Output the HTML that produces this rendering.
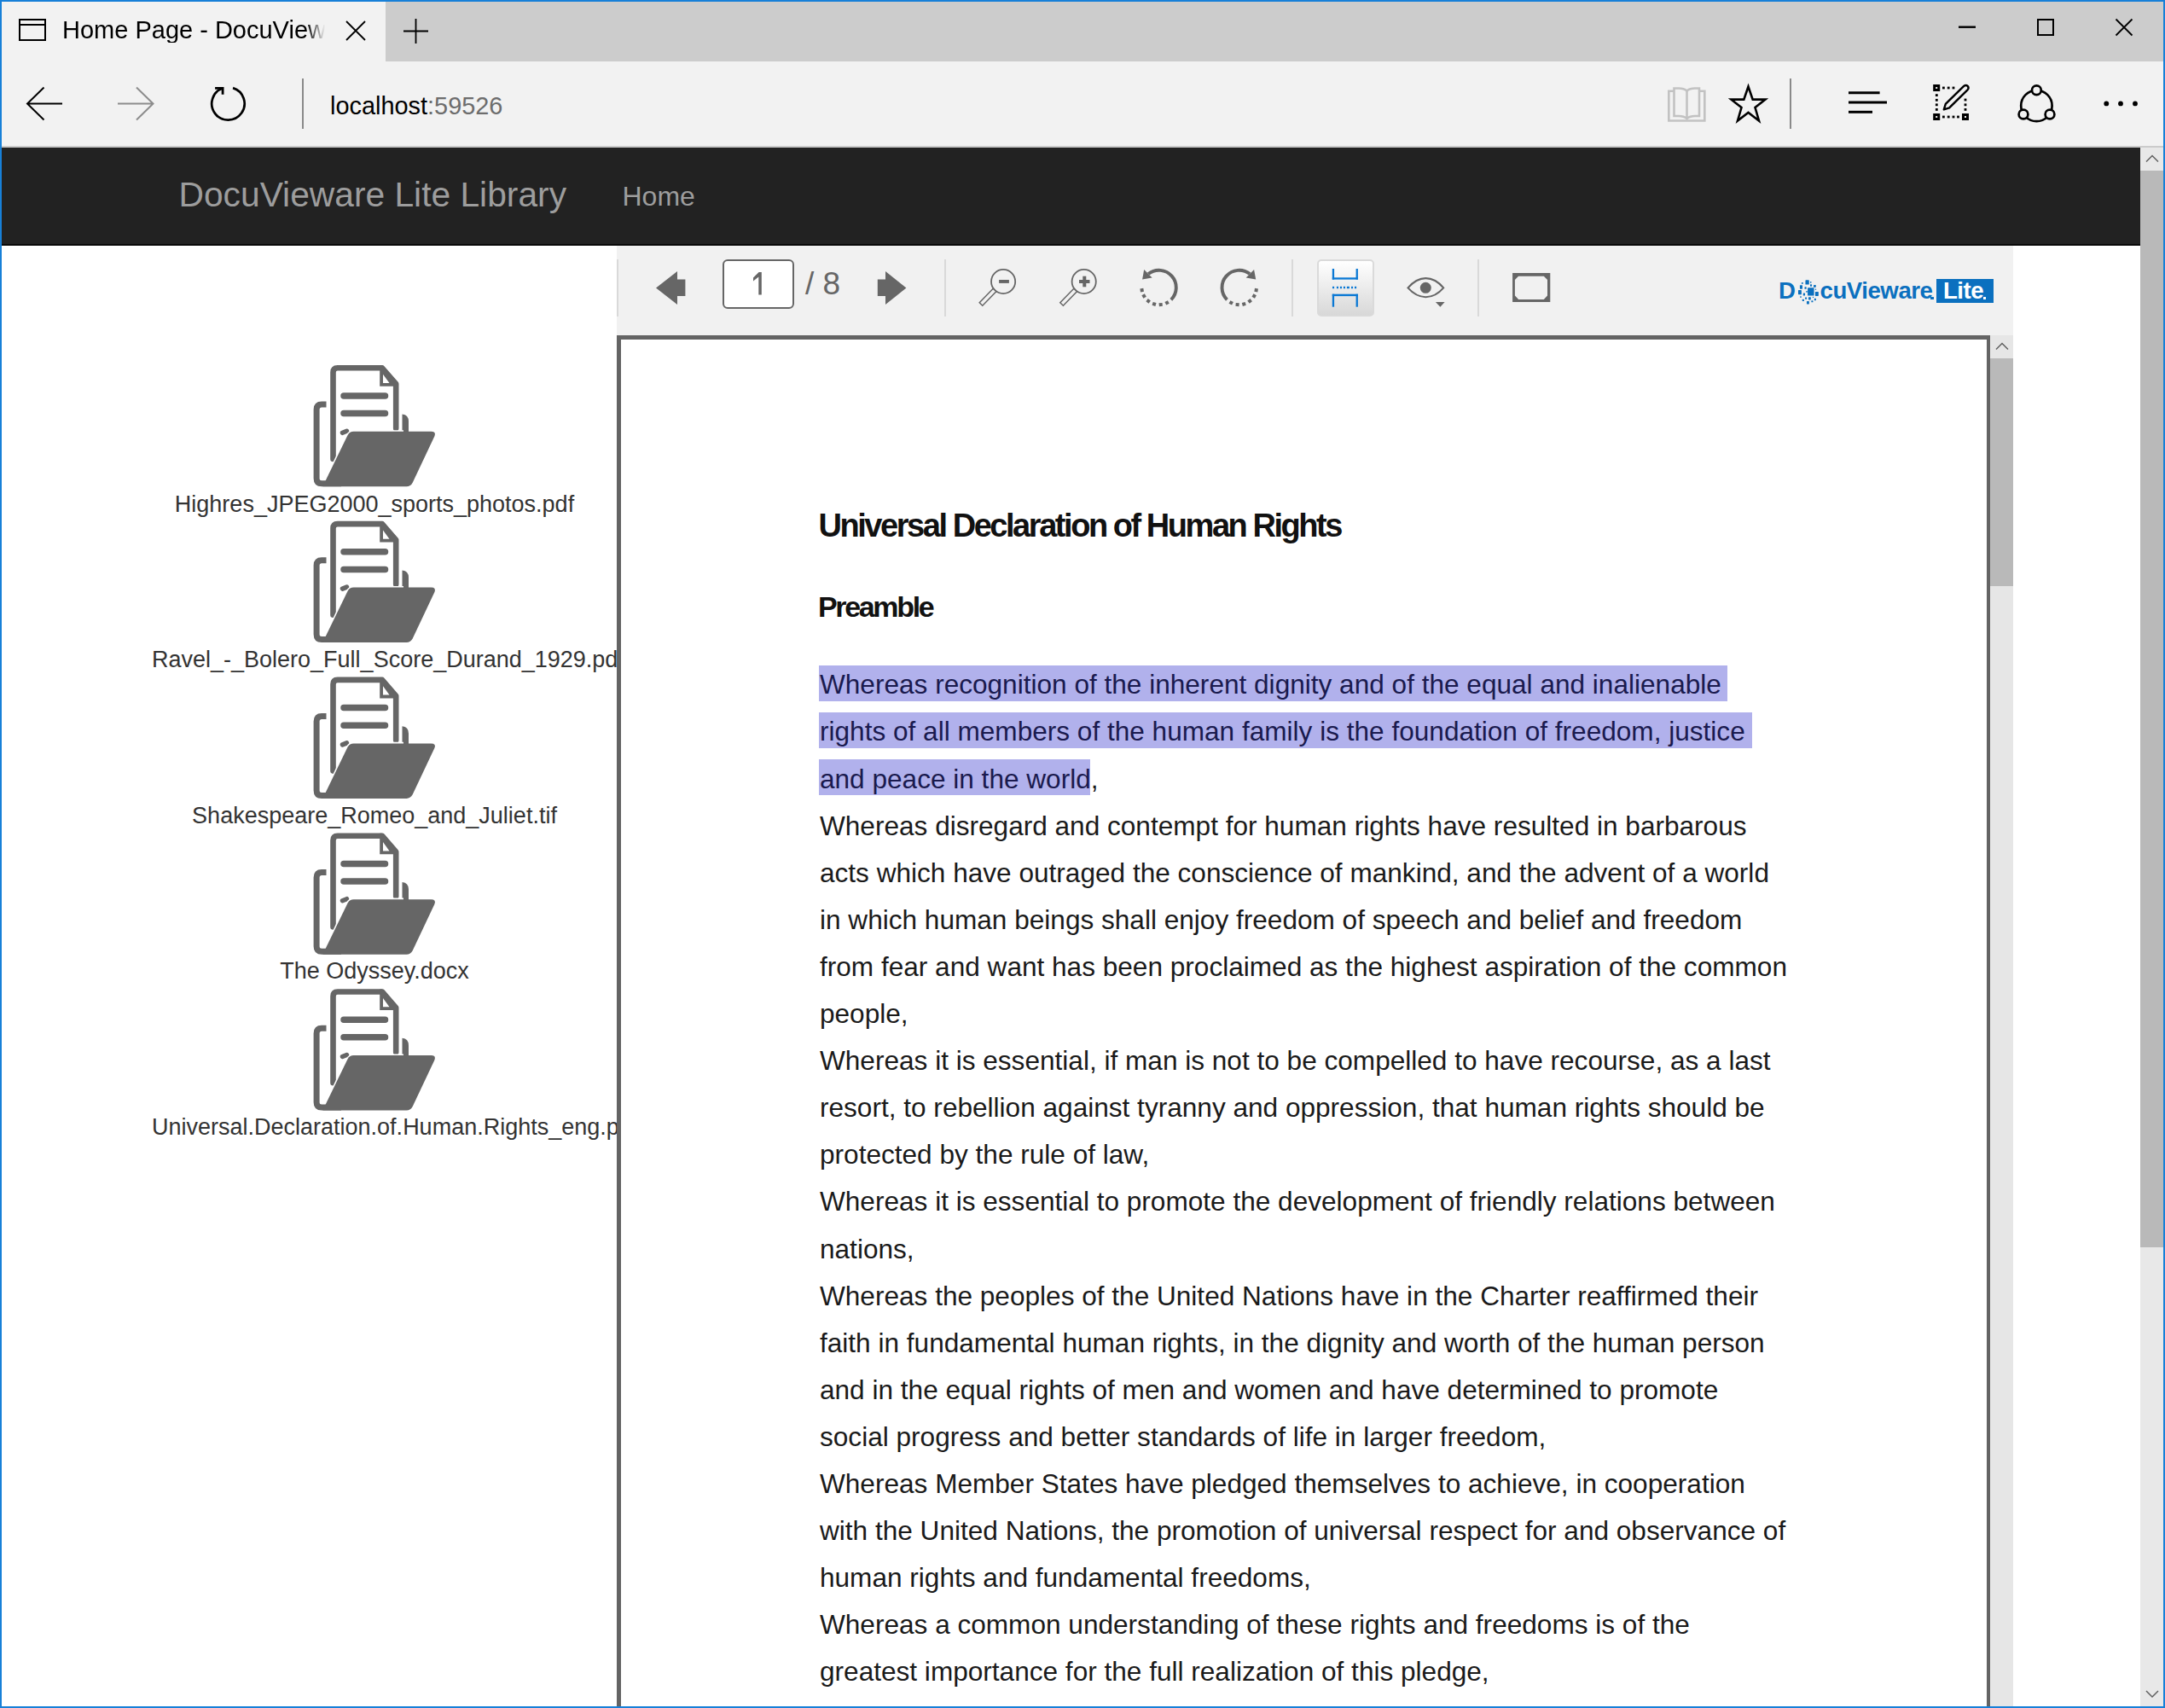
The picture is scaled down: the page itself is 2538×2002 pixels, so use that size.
<!DOCTYPE html>
<html><head><meta charset="utf-8"><title>Home Page - DocuVieware</title>
<style>
html,body{margin:0;padding:0;width:2538px;height:2002px;overflow:hidden;background:#fff}
body{position:relative;font-family:"Liberation Sans", sans-serif}
div{box-sizing:content-box}
</style></head><body>
<div style="position:absolute;left:0px;top:0px;width:2538px;height:2002px;background:#ffffff;"></div>
<div style="position:absolute;left:0px;top:0px;width:2538px;height:72px;background:#cccccc;"></div>
<div style="position:absolute;left:0px;top:0px;width:452px;height:72px;background:#f2f2f2;"></div>
<div style="position:absolute;left:0px;top:72px;width:2538px;height:99px;background:#f2f2f2;"></div>
<div style="position:absolute;left:0px;top:171px;width:2538px;height:2px;background:#cbcbcb;"></div>
<div style="position:absolute;left:0px;top:173px;width:2509px;height:113px;background:#222222;"></div>
<div style="position:absolute;left:0px;top:286px;width:2509px;height:2px;background:#080808;"></div>
<div style="position:absolute;left:2509px;top:173px;width:27px;height:1829px;background:#e8e8e8;"></div>
<div style="position:absolute;left:2509px;top:200px;width:27px;height:1262px;background:#b9b9b9;"></div>
<div style="position:absolute;left:73px;top:21.45px;width:308px;overflow:hidden;font-size:29px;line-height:29px;color:#000;white-space:pre;-webkit-mask-image:linear-gradient(to right,#000 93%,transparent 100%)">Home Page - DocuView</div>
<div style="position:absolute;left:387px;top:109.54px;font-size:28.9px;line-height:28.9px;color:#000;font-weight:normal;letter-spacing:0px;white-space:pre;">localhost<span style="color:#6d6d6d">:59526</span></div>
<div style="position:absolute;left:209.5px;top:208.11px;font-size:40.75px;line-height:40.75px;color:#9d9d9d;font-weight:normal;letter-spacing:0px;white-space:pre;">DocuVieware Lite Library</div>
<div style="position:absolute;left:729.5px;top:213.71px;font-size:32px;line-height:32px;color:#9d9d9d;font-weight:normal;letter-spacing:0px;white-space:pre;">Home</div>
<div style="position:absolute;left:178px;width:522px;top:577.94px;font-size:27px;line-height:27px;color:#333;text-align:center;white-space:nowrap;overflow:visible"><span style="display:inline-block;min-width:100%">Highres_JPEG2000_sports_photos.pdf</span></div>
<div style="position:absolute;left:178px;width:522px;top:760.44px;font-size:27px;line-height:27px;color:#333;text-align:center;white-space:nowrap;overflow:visible"><span style="display:inline-block;min-width:100%">Ravel_-_Bolero_Full_Score_Durand_1929.pdf</span></div>
<div style="position:absolute;left:178px;width:522px;top:942.94px;font-size:27px;line-height:27px;color:#333;text-align:center;white-space:nowrap;overflow:visible"><span style="display:inline-block;min-width:100%">Shakespeare_Romeo_and_Juliet.tif</span></div>
<div style="position:absolute;left:178px;width:522px;top:1125.44px;font-size:27px;line-height:27px;color:#333;text-align:center;white-space:nowrap;overflow:visible"><span style="display:inline-block;min-width:100%">The Odyssey.docx</span></div>
<div style="position:absolute;left:178px;width:522px;top:1307.94px;font-size:27px;line-height:27px;color:#333;text-align:center;white-space:nowrap;overflow:visible"><span style="display:inline-block;min-width:100%">Universal.Declaration.of.Human.Rights_eng.pdf</span></div>
<div style="position:absolute;left:723px;top:288px;width:1637px;height:105px;background:#f1f1f1;"></div>
<div style="position:absolute;left:723px;top:304px;width:2px;height:67px;background:#d9d9d9;"></div>
<div style="position:absolute;left:1107px;top:304px;width:2px;height:67px;background:#d9d9d9;"></div>
<div style="position:absolute;left:1514px;top:304px;width:2px;height:67px;background:#d9d9d9;"></div>
<div style="position:absolute;left:1732px;top:304px;width:2px;height:67px;background:#d9d9d9;"></div>
<div style="position:absolute;left:846.8px;top:304px;width:80.7px;height:53.5px;border:2px solid #666;border-radius:6px;background:#fff"></div>
<div style="position:absolute;left:944px;top:314.28px;font-size:37px;line-height:37px;color:#666;font-weight:normal;letter-spacing:0px;white-space:pre;">/ 8</div>
<div style="position:absolute;left:1543.5px;top:304px;width:63px;height:62.5px;border:2px solid #dadada;border-radius:5px;background:linear-gradient(#ffffff,#d8d8d8)"></div>
<div style="position:absolute;left:2084.9px;top:327.44px;font-size:27.6px;line-height:27.6px;color:#0b70bf;font-weight:bold;letter-spacing:0px;white-space:pre;">D</div>
<div style="position:absolute;left:2133.5px;top:327.44px;font-size:27.6px;line-height:27.6px;color:#0b70bf;font-weight:bold;letter-spacing:-0.45px;white-space:pre;">cuVieware</div>
<div style="position:absolute;left:2263px;top:347.5px;width:3.5px;height:3.3000000000000114px;background:#0b70bf;"></div>
<div style="position:absolute;left:2270px;top:326.8px;width:67px;height:28.0px;background:#0b70bf;"></div>
<div style="position:absolute;left:2278px;top:327.44px;font-size:27.6px;line-height:27.6px;color:#fff;font-weight:bold;letter-spacing:-0.5px;white-space:pre;">Lite</div>
<div style="position:absolute;left:2324.5px;top:347.5px;width:3.5px;height:3.3000000000000114px;background:#fff;"></div>
<div style="position:absolute;left:723px;top:393px;width:1601px;height:1700px;border:5px solid #646464;border-right-width:4px;background:#fff"></div>
<div style="position:absolute;left:2333px;top:393px;width:27px;height:1609px;background:#e6e6e6;"></div>
<div style="position:absolute;left:2333px;top:420px;width:27px;height:266.5px;background:#b9b9b9;"></div>
<div style="position:absolute;left:960px;top:780.3px;width:1065.4px;height:41.5px;background:#b1b1ec;"></div>
<div style="position:absolute;left:960px;top:835.1px;width:1093.5px;height:41.60000000000002px;background:#b1b1ec;"></div>
<div style="position:absolute;left:960px;top:890px;width:318px;height:41.799999999999955px;background:#b1b1ec;"></div>
<div style="position:absolute;left:959.5px;top:597.23px;font-size:38px;line-height:38px;color:#111;font-weight:bold;letter-spacing:-2.45px;white-space:pre;">Universal Declaration of Human Rights</div>
<div style="position:absolute;left:959px;top:693.72px;font-size:34px;line-height:34px;color:#111;font-weight:bold;letter-spacing:-2.35px;white-space:pre;">Preamble</div>
<div style="position:absolute;left:961px;top:787.37px;font-size:31.58px;line-height:31.58px;color:#1a1a4e;font-weight:normal;letter-spacing:0px;white-space:pre;">Whereas recognition of the inherent dignity and of the equal and inalienable</div>
<div style="position:absolute;left:961px;top:842.47px;font-size:31.58px;line-height:31.58px;color:#1a1a4e;font-weight:normal;letter-spacing:0px;white-space:pre;">rights of all members of the human family is the foundation of freedom, justice</div>
<div style="position:absolute;left:961px;top:897.57px;font-size:31.58px;line-height:31.58px;color:#1a1a4e;font-weight:normal;letter-spacing:0px;white-space:pre;">and peace in the world<span style="color:#1a1a1a">,</span></div>
<div style="position:absolute;left:961px;top:952.67px;font-size:31.58px;line-height:31.58px;color:#1a1a1a;font-weight:normal;letter-spacing:0px;white-space:pre;">Whereas disregard and contempt for human rights have resulted in barbarous</div>
<div style="position:absolute;left:961px;top:1007.77px;font-size:31.58px;line-height:31.58px;color:#1a1a1a;font-weight:normal;letter-spacing:0px;white-space:pre;">acts which have outraged the conscience of mankind, and the advent of a world</div>
<div style="position:absolute;left:961px;top:1062.87px;font-size:31.58px;line-height:31.58px;color:#1a1a1a;font-weight:normal;letter-spacing:0px;white-space:pre;">in which human beings shall enjoy freedom of speech and belief and freedom</div>
<div style="position:absolute;left:961px;top:1117.97px;font-size:31.58px;line-height:31.58px;color:#1a1a1a;font-weight:normal;letter-spacing:0px;white-space:pre;">from fear and want has been proclaimed as the highest aspiration of the common</div>
<div style="position:absolute;left:961px;top:1173.07px;font-size:31.58px;line-height:31.58px;color:#1a1a1a;font-weight:normal;letter-spacing:0px;white-space:pre;">people,</div>
<div style="position:absolute;left:961px;top:1228.17px;font-size:31.58px;line-height:31.58px;color:#1a1a1a;font-weight:normal;letter-spacing:0px;white-space:pre;">Whereas it is essential, if man is not to be compelled to have recourse, as a last</div>
<div style="position:absolute;left:961px;top:1283.27px;font-size:31.58px;line-height:31.58px;color:#1a1a1a;font-weight:normal;letter-spacing:0px;white-space:pre;">resort, to rebellion against tyranny and oppression, that human rights should be</div>
<div style="position:absolute;left:961px;top:1338.37px;font-size:31.58px;line-height:31.58px;color:#1a1a1a;font-weight:normal;letter-spacing:0px;white-space:pre;">protected by the rule of law,</div>
<div style="position:absolute;left:961px;top:1393.47px;font-size:31.58px;line-height:31.58px;color:#1a1a1a;font-weight:normal;letter-spacing:0px;white-space:pre;">Whereas it is essential to promote the development of friendly relations between</div>
<div style="position:absolute;left:961px;top:1448.57px;font-size:31.58px;line-height:31.58px;color:#1a1a1a;font-weight:normal;letter-spacing:0px;white-space:pre;">nations,</div>
<div style="position:absolute;left:961px;top:1503.67px;font-size:31.58px;line-height:31.58px;color:#1a1a1a;font-weight:normal;letter-spacing:0px;white-space:pre;">Whereas the peoples of the United Nations have in the Charter reaffirmed their</div>
<div style="position:absolute;left:961px;top:1558.77px;font-size:31.58px;line-height:31.58px;color:#1a1a1a;font-weight:normal;letter-spacing:0px;white-space:pre;">faith in fundamental human rights, in the dignity and worth of the human person</div>
<div style="position:absolute;left:961px;top:1613.87px;font-size:31.58px;line-height:31.58px;color:#1a1a1a;font-weight:normal;letter-spacing:0px;white-space:pre;">and in the equal rights of men and women and have determined to promote</div>
<div style="position:absolute;left:961px;top:1668.97px;font-size:31.58px;line-height:31.58px;color:#1a1a1a;font-weight:normal;letter-spacing:0px;white-space:pre;">social progress and better standards of life in larger freedom,</div>
<div style="position:absolute;left:961px;top:1724.07px;font-size:31.58px;line-height:31.58px;color:#1a1a1a;font-weight:normal;letter-spacing:0px;white-space:pre;">Whereas Member States have pledged themselves to achieve, in cooperation</div>
<div style="position:absolute;left:961px;top:1779.17px;font-size:31.58px;line-height:31.58px;color:#1a1a1a;font-weight:normal;letter-spacing:0px;white-space:pre;">with the United Nations, the promotion of universal respect for and observance of</div>
<div style="position:absolute;left:961px;top:1834.27px;font-size:31.58px;line-height:31.58px;color:#1a1a1a;font-weight:normal;letter-spacing:0px;white-space:pre;">human rights and fundamental freedoms,</div>
<div style="position:absolute;left:961px;top:1889.37px;font-size:31.58px;line-height:31.58px;color:#1a1a1a;font-weight:normal;letter-spacing:0px;white-space:pre;">Whereas a common understanding of these rights and freedoms is of the</div>
<div style="position:absolute;left:961px;top:1944.47px;font-size:31.58px;line-height:31.58px;color:#1a1a1a;font-weight:normal;letter-spacing:0px;white-space:pre;">greatest importance for the full realization of this pledge,</div>
<div style="position:absolute;left:0px;top:0px;width:2538px;height:2px;background:#1780d8;"></div>
<div style="position:absolute;left:0px;top:0px;width:2px;height:2002px;background:#1780d8;"></div>
<div style="position:absolute;left:2536px;top:0px;width:2px;height:2002px;background:#1780d8;"></div>
<div style="position:absolute;left:0px;top:2000px;width:2538px;height:2px;background:#1780d8;"></div>
<svg width="2538" height="2002" style="position:absolute;left:0;top:0">
<defs><filter id="soft" x="-5%" y="-5%" width="110%" height="110%"><feGaussianBlur stdDeviation="0.6"/></filter></defs>
<rect x="23" y="23" width="30" height="24" fill="none" stroke="#000" stroke-width="2"/><line x1="22" y1="29" x2="54" y2="29" stroke="#000" stroke-width="2"/>
<path d="M406 25 L428 47 M428 25 L406 47" stroke="#000" stroke-width="1.8" fill="none"/>
<path d="M487.5 22 V51 M473 36.5 H502" stroke="#000" stroke-width="1.8" fill="none"/>
<path d="M51.5 102.5 L32 121.5 L51.5 140.5 M32 121.5 H73" stroke="#000" stroke-width="2" fill="none"/>
<path d="M160 102.5 L179.5 121.5 L160 140.5 M179.5 121.5 H138" stroke="#8c8c8c" stroke-width="2" fill="none"/>
<path d="M273.06 103.09 A19.2 19.2 0 1 1 261.52 103.19" stroke="#000" stroke-width="2.7" fill="none"/><path d="M252.1 103.3 H261.1 V110.8" stroke="#000" stroke-width="2.8" fill="none"/>
<line x1="355" y1="92" x2="355" y2="151" stroke="#8a8a8a" stroke-width="2"/>
<rect x="2296" y="30.5" width="20" height="2.4" fill="#000"/>
<rect x="2389" y="23" width="18" height="18" fill="none" stroke="#000" stroke-width="2"/>
<path d="M2480.5 22.5 L2499.5 41.5 M2499.5 22.5 L2480.5 41.5" stroke="#000" stroke-width="1.8" fill="none"/>
<g stroke="#c2c2c2" stroke-width="2.6" fill="none"><path d="M1962 106.8 H1956.3 V141.5 H1998.3 V106.8 H1992.5"/><path d="M1962.5 103.5 V136 H1968 Q1974 136 1977.5 139 Q1981 136 1987 136 H1992 V103.5 H1987 Q1981 103.5 1977.5 106.5 Q1974 103.5 1968 103.5 Z"/><line x1="1977.5" y1="106.5" x2="1977.5" y2="138"/></g>
<path d="M2049.5 101.5 L2054.7 116.6 L2069.5 116.6 L2057.5 126 L2062 141.5 L2049.5 132 L2037 141.5 L2041.5 126 L2029.5 116.6 L2044.3 116.6 Z" fill="none" stroke="#000" stroke-width="2.6" stroke-linejoin="miter"/>
<line x1="2099" y1="92" x2="2099" y2="151" stroke="#8a8a8a" stroke-width="2"/>
<g stroke="#000" stroke-width="3"><line x1="2167" y1="108.7" x2="2203.6" y2="108.7"/><line x1="2167" y1="120" x2="2212" y2="120"/><line x1="2167" y1="131.3" x2="2195" y2="131.3"/></g>
<g fill="#000"><path d="M2266.2 99.1 h8 v8 h-8 Z M2269.2 102.1 v2 h2 v-2 Z" fill-rule="evenodd"/><path d="M2266.2 133 h8 v8 h-8 Z M2269.2 136 v2 h2 v-2 Z" fill-rule="evenodd"/><path d="M2300 133 h8 v8 h-8 Z M2303 136 v2 h2 v-2 Z" fill-rule="evenodd"/><rect x="2277.0" y="101.6" width="2.8" height="2.8"/><rect x="2282.7999999999997" y="101.6" width="2.8" height="2.8"/><rect x="2288.6" y="101.6" width="2.8" height="2.8"/><rect x="2268.9" y="110.19999999999999" width="2.8" height="2.8"/><rect x="2268.9" y="115.89999999999999" width="2.8" height="2.8"/><rect x="2268.9" y="121.39999999999999" width="2.8" height="2.8"/><rect x="2268.9" y="127.0" width="2.8" height="2.8"/><rect x="2277.0" y="135.6" width="2.8" height="2.8"/><rect x="2282.7999999999997" y="135.6" width="2.8" height="2.8"/><rect x="2288.6" y="135.6" width="2.8" height="2.8"/><rect x="2294.1" y="135.6" width="2.8" height="2.8"/><rect x="2302.6" y="115.6" width="2.8" height="2.8"/><rect x="2302.6" y="121.39999999999999" width="2.8" height="2.8"/><rect x="2302.6" y="127.0" width="2.8" height="2.8"/></g><path d="M2278.8 128.3 L2280.8 121.8 L2302.2 100.9 Q2304.6 98.9 2306.7 100.9 Q2308.6 103.1 2306.5 105.3 L2285.2 126.3 Z" fill="none" stroke="#000" stroke-width="2.4" stroke-linejoin="round"/>
<g stroke="#000" stroke-width="2.7" fill="#f2f2f2"><circle cx="2387.4" cy="124" r="18.2" fill="none"/><circle cx="2387.4" cy="105.8" r="5.4"/><circle cx="2372" cy="134" r="5.4"/><circle cx="2403" cy="134" r="5.4"/></g>
<g fill="#000"><circle cx="2469.3" cy="121.4" r="2.9"/><circle cx="2486" cy="121.4" r="2.9"/><circle cx="2503" cy="121.4" r="2.9"/></g>
<path d="M2516 189.5 L2523 182.5 L2530 189.5" stroke="#606060" stroke-width="1.5" fill="none"/>
<path d="M2516 1982 L2523 1989 L2530 1982" stroke="#606060" stroke-width="1.5" fill="none"/>
<g transform="translate(360,420.00)" filter="url(#soft)"><path d="M30.5 118 V16.5 Q30.5 11.3 35.7 11.3 H88 L104.2 30 V82" fill="none" stroke="#666" stroke-width="6.6" stroke-linejoin="round" stroke-linecap="round"/><path d="M85.2 8.3 H88 L106.8 30 V32.8 H85.2 Z M89 18.7 V29 H96.5 Z" fill="#666" fill-rule="evenodd"/><path d="M43 44 H91.5 M43 64.6 H91.5" stroke="#666" stroke-width="7.5" stroke-linecap="round"/><path d="M41.5 87.3 L46.5 85.3" stroke="#666" stroke-width="5.5" stroke-linecap="round"/><path d="M22.5 54 H17.1 Q11.1 54 11.1 60 V140.8 Q11.1 146.8 17.1 146.8 H40" fill="none" stroke="#666" stroke-width="7"/><path d="M111.5 88 V65.6 Q119 66.5 119 74 V88 Z" fill="#666"/><path d="M22.9 141 L47.6 90 Q50 85.8 54.5 85.8 H113" fill="none" stroke="#fff" stroke-width="3.2"/><path d="M54.5 85.8 H145.5 Q151.5 85.8 149.3 91.5 L123.8 145.5 Q121.5 150.3 116.5 150.3 H18.3 L47.6 90 Q50 85.8 54.5 85.8 Z" fill="#666"/></g>
<g transform="translate(360,602.80)" filter="url(#soft)"><path d="M30.5 118 V16.5 Q30.5 11.3 35.7 11.3 H88 L104.2 30 V82" fill="none" stroke="#666" stroke-width="6.6" stroke-linejoin="round" stroke-linecap="round"/><path d="M85.2 8.3 H88 L106.8 30 V32.8 H85.2 Z M89 18.7 V29 H96.5 Z" fill="#666" fill-rule="evenodd"/><path d="M43 44 H91.5 M43 64.6 H91.5" stroke="#666" stroke-width="7.5" stroke-linecap="round"/><path d="M41.5 87.3 L46.5 85.3" stroke="#666" stroke-width="5.5" stroke-linecap="round"/><path d="M22.5 54 H17.1 Q11.1 54 11.1 60 V140.8 Q11.1 146.8 17.1 146.8 H40" fill="none" stroke="#666" stroke-width="7"/><path d="M111.5 88 V65.6 Q119 66.5 119 74 V88 Z" fill="#666"/><path d="M22.9 141 L47.6 90 Q50 85.8 54.5 85.8 H113" fill="none" stroke="#fff" stroke-width="3.2"/><path d="M54.5 85.8 H145.5 Q151.5 85.8 149.3 91.5 L123.8 145.5 Q121.5 150.3 116.5 150.3 H18.3 L47.6 90 Q50 85.8 54.5 85.8 Z" fill="#666"/></g>
<g transform="translate(360,785.60)" filter="url(#soft)"><path d="M30.5 118 V16.5 Q30.5 11.3 35.7 11.3 H88 L104.2 30 V82" fill="none" stroke="#666" stroke-width="6.6" stroke-linejoin="round" stroke-linecap="round"/><path d="M85.2 8.3 H88 L106.8 30 V32.8 H85.2 Z M89 18.7 V29 H96.5 Z" fill="#666" fill-rule="evenodd"/><path d="M43 44 H91.5 M43 64.6 H91.5" stroke="#666" stroke-width="7.5" stroke-linecap="round"/><path d="M41.5 87.3 L46.5 85.3" stroke="#666" stroke-width="5.5" stroke-linecap="round"/><path d="M22.5 54 H17.1 Q11.1 54 11.1 60 V140.8 Q11.1 146.8 17.1 146.8 H40" fill="none" stroke="#666" stroke-width="7"/><path d="M111.5 88 V65.6 Q119 66.5 119 74 V88 Z" fill="#666"/><path d="M22.9 141 L47.6 90 Q50 85.8 54.5 85.8 H113" fill="none" stroke="#fff" stroke-width="3.2"/><path d="M54.5 85.8 H145.5 Q151.5 85.8 149.3 91.5 L123.8 145.5 Q121.5 150.3 116.5 150.3 H18.3 L47.6 90 Q50 85.8 54.5 85.8 Z" fill="#666"/></g>
<g transform="translate(360,968.40)" filter="url(#soft)"><path d="M30.5 118 V16.5 Q30.5 11.3 35.7 11.3 H88 L104.2 30 V82" fill="none" stroke="#666" stroke-width="6.6" stroke-linejoin="round" stroke-linecap="round"/><path d="M85.2 8.3 H88 L106.8 30 V32.8 H85.2 Z M89 18.7 V29 H96.5 Z" fill="#666" fill-rule="evenodd"/><path d="M43 44 H91.5 M43 64.6 H91.5" stroke="#666" stroke-width="7.5" stroke-linecap="round"/><path d="M41.5 87.3 L46.5 85.3" stroke="#666" stroke-width="5.5" stroke-linecap="round"/><path d="M22.5 54 H17.1 Q11.1 54 11.1 60 V140.8 Q11.1 146.8 17.1 146.8 H40" fill="none" stroke="#666" stroke-width="7"/><path d="M111.5 88 V65.6 Q119 66.5 119 74 V88 Z" fill="#666"/><path d="M22.9 141 L47.6 90 Q50 85.8 54.5 85.8 H113" fill="none" stroke="#fff" stroke-width="3.2"/><path d="M54.5 85.8 H145.5 Q151.5 85.8 149.3 91.5 L123.8 145.5 Q121.5 150.3 116.5 150.3 H18.3 L47.6 90 Q50 85.8 54.5 85.8 Z" fill="#666"/></g>
<g transform="translate(360,1151.20)" filter="url(#soft)"><path d="M30.5 118 V16.5 Q30.5 11.3 35.7 11.3 H88 L104.2 30 V82" fill="none" stroke="#666" stroke-width="6.6" stroke-linejoin="round" stroke-linecap="round"/><path d="M85.2 8.3 H88 L106.8 30 V32.8 H85.2 Z M89 18.7 V29 H96.5 Z" fill="#666" fill-rule="evenodd"/><path d="M43 44 H91.5 M43 64.6 H91.5" stroke="#666" stroke-width="7.5" stroke-linecap="round"/><path d="M41.5 87.3 L46.5 85.3" stroke="#666" stroke-width="5.5" stroke-linecap="round"/><path d="M22.5 54 H17.1 Q11.1 54 11.1 60 V140.8 Q11.1 146.8 17.1 146.8 H40" fill="none" stroke="#666" stroke-width="7"/><path d="M111.5 88 V65.6 Q119 66.5 119 74 V88 Z" fill="#666"/><path d="M22.9 141 L47.6 90 Q50 85.8 54.5 85.8 H113" fill="none" stroke="#fff" stroke-width="3.2"/><path d="M54.5 85.8 H145.5 Q151.5 85.8 149.3 91.5 L123.8 145.5 Q121.5 150.3 116.5 150.3 H18.3 L47.6 90 Q50 85.8 54.5 85.8 Z" fill="#666"/></g>
<polygon points="769,337.5 794,318 794,327.5 803.4,327.5 803.4,347 794,347 794,357" fill="#666"/>
<polygon points="1062.4,337.5 1038,318 1038,327.5 1028.8,327.5 1028.8,347 1038,347 1038,357" fill="#666"/>
<path d="M892.8 345.6 V319 H889.6 L883 325.6 V329.6 L889.3 324.4 V345.6 Z" fill="#666"/>
<circle cx="1176.1" cy="330" r="14.1" fill="none" stroke="#666" stroke-width="1.8"/><polygon points="1164.1999999999998,338.2 1167.8,341.8 1151.8,358.3 1148.1999999999998,354.7" fill="#f1f1f1" stroke="#666" stroke-width="1.5"/><rect x="1171.1" y="328" width="11.8" height="3.9" fill="#666"/>
<circle cx="1270.7" cy="330" r="14.1" fill="none" stroke="#666" stroke-width="1.8"/><polygon points="1258.8,338.2 1262.4,341.8 1246.4,358.3 1242.8,354.7" fill="#f1f1f1" stroke="#666" stroke-width="1.5"/><rect x="1265.0" y="328" width="12.5" height="4" fill="#666"/><rect x="1269.3" y="323.7" width="4" height="12.6" fill="#666"/>
<g transform="translate(1358.6,0) scale(1,1) translate(-1358.6,0)"><path d="M1346.16 321.08 A20.2 20.2 0 0 1 1372.88 351.28" fill="none" stroke="#666" stroke-width="3.9"/><polygon points="1341.1999999999998,315.9 1339.1,327.5 1350.6,325.5" fill="#666"/><rect x="1366.08" y="352.84" width="4" height="4" fill="#666" transform="rotate(62 1368.08 354.84)"/><rect x="1358.71" y="355.09" width="4" height="4" fill="#666" transform="rotate(84 1360.71 357.09)"/><rect x="1351.03" y="354.42" width="4" height="4" fill="#666" transform="rotate(106 1353.03 356.42)"/><rect x="1344.16" y="350.92" width="4" height="4" fill="#666" transform="rotate(128 1346.16 352.92)"/><rect x="1339.11" y="345.10" width="4" height="4" fill="#666" transform="rotate(150 1341.11 347.10)"/><rect x="1336.65" y="338.16" width="4" height="4" fill="#666" transform="rotate(171 1338.65 340.16)"/></g>
<g transform="translate(1452.7,0) scale(-1,1) translate(-1452.7,0)"><path d="M1440.26 321.08 A20.2 20.2 0 0 1 1466.98 351.28" fill="none" stroke="#666" stroke-width="3.9"/><polygon points="1435.3,315.9 1433.2,327.5 1444.7,325.5" fill="#666"/><rect x="1460.18" y="352.84" width="4" height="4" fill="#666" transform="rotate(62 1462.18 354.84)"/><rect x="1452.81" y="355.09" width="4" height="4" fill="#666" transform="rotate(84 1454.81 357.09)"/><rect x="1445.13" y="354.42" width="4" height="4" fill="#666" transform="rotate(106 1447.13 356.42)"/><rect x="1438.26" y="350.92" width="4" height="4" fill="#666" transform="rotate(128 1440.26 352.92)"/><rect x="1433.21" y="345.10" width="4" height="4" fill="#666" transform="rotate(150 1435.21 347.10)"/><rect x="1430.75" y="338.16" width="4" height="4" fill="#666" transform="rotate(171 1432.75 340.16)"/></g>
<g fill="#0a78d4"><rect x="1561.8" y="315" width="2.3" height="12.6"/><rect x="1589.6" y="315" width="2.3" height="12.6"/><rect x="1561.8" y="325.3" width="30.1" height="2.3"/><rect x="1561.8" y="344.7" width="30.1" height="2.4"/><rect x="1561.8" y="344.7" width="2.3" height="15"/><rect x="1589.6" y="344.7" width="2.3" height="15"/><rect x="1562" y="335.8" width="2.1" height="2.4"/><rect x="1566.9" y="335.8" width="2.1" height="2.4"/><rect x="1570.9" y="335.8" width="2.1" height="2.4"/><rect x="1574.9" y="335.8" width="2.1" height="2.4"/><rect x="1578.9" y="335.8" width="3.0" height="2.4"/><rect x="1584" y="335.8" width="2.1" height="2.4"/><rect x="1588" y="335.8" width="2.1" height="2.4"/></g>
<path d="M1650.5 337.4 C1657 330 1664 326.1 1671.3 326.1 C1679 326.1 1686 330 1692.2 337.4 C1686 344.6 1679 348.2 1671.3 348.2 C1664 348.2 1657 344.6 1650.5 337.4 Z" fill="none" stroke="#666" stroke-width="2.1"/><circle cx="1671.3" cy="337.3" r="6.5" fill="#666"/><polygon points="1682.9,354.1 1693.6,354.1 1688.4,359.7" fill="#666"/>
<path d="M1773.1 320 H1817.3 V354.1 H1773.1 Z M1780.1 323.7 L1775.9 328 V346.6 L1780.1 350.9 H1809.8 L1814 346.6 V328 L1809.8 323.7 Z" fill="#666" fill-rule="evenodd"/>
<g fill="#0b70bf"><rect x="2111.87" y="330.95" width="1.94" height="1.80" rx="0.6"/><rect x="2116.45" y="328.31" width="4.30" height="5.27" rx="0.6"/><rect x="2121.99" y="330.12" width="1.52" height="1.52" rx="0.6"/><rect x="2109.93" y="334.27" width="3.05" height="4.43" rx="0.6"/><rect x="2115.48" y="336.35" width="2.22" height="2.49" rx="0.6"/><rect x="2121.99" y="333.17" width="2.08" height="2.49" rx="0.6"/><rect x="2126.01" y="334.00" width="2.77" height="2.77" rx="0.6"/><rect x="2119.08" y="337.18" width="7.48" height="9.42" rx="0.6"/><rect x="2127.81" y="338.43" width="1.39" height="1.39" rx="0.6"/><rect x="2107.99" y="340.09" width="3.88" height="5.13" rx="0.6"/><rect x="2117.14" y="341.06" width="1.66" height="1.66" rx="0.6"/><rect x="2113.81" y="343.42" width="2.22" height="3.19" rx="0.6"/><rect x="2127.95" y="341.90" width="3.88" height="4.99" rx="0.6"/><rect x="2110.07" y="347.30" width="1.80" height="1.52" rx="0.6"/><rect x="2116.03" y="348.41" width="2.08" height="2.22" rx="0.6"/><rect x="2120.05" y="348.13" width="2.77" height="3.33" rx="0.6"/><rect x="2124.90" y="347.72" width="1.25" height="1.39" rx="0.6"/><rect x="2112.84" y="350.76" width="2.08" height="2.22" rx="0.6"/><rect x="2126.84" y="349.79" width="2.08" height="2.36" rx="0.6"/><rect x="2117.97" y="353.12" width="2.91" height="3.46" rx="0.6"/><rect x="2123.38" y="352.15" width="2.08" height="2.22" rx="0.6"/></g>
<path d="M2340 409.5 L2347 402.5 L2354 409.5" stroke="#606060" stroke-width="1.5" fill="none"/>
</svg>
</body></html>
